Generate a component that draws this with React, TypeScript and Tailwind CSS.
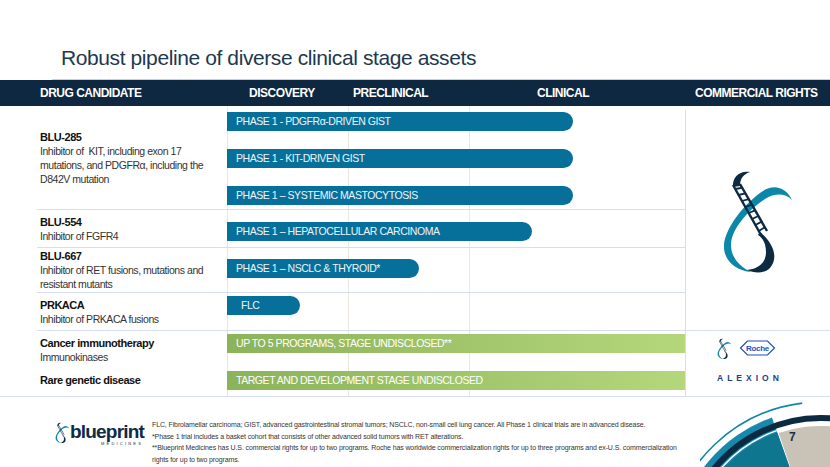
import React from "react";

const narrow = "font-['Liberation_Sans',Arial,sans-serif] tracking-[-0.45px]";

// point on a circle, angle in degrees (counter-clockwise, y down screen)
const pt = (cx: number, cy: number, r: number, a: number) => {
  const t = (a * Math.PI) / 180;
  return [cx + r * Math.cos(t), cy - r * Math.sin(t)];
};

const arc = (cx: number, cy: number, r: number, a0: number, a1: number) => {
  const [x0, y0] = pt(cx, cy, r, a0);
  const [x1, y1] = pt(cx, cy, r, a1);
  return `M${x0} ${y0} A${r} ${r} 0 0 0 ${x1} ${y1}`;
};

const sector = (cx: number, cy: number, r: number, a0: number, a1: number) => {
  const [x0, y0] = pt(cx, cy, r, a0);
  const [x1, y1] = pt(cx, cy, r, a1);
  return `M${cx} ${cy} L${x0} ${y0} A${r} ${r} 0 0 0 ${x1} ${y1} Z`;
};

const Helix: React.FC<{ className?: string }> = ({ className }) => {
  const rungs = [0.08, 0.2, 0.32, 0.44, 0.56, 0.68, 0.8, 0.92];
  return (
    <svg viewBox="0 0 75 110" className={className}>
      <path
        d="M71 35 C66 24 54 18 42 26 C26 36 4 62 3 80 C2 96 16 106 30 107 C18 101 10 92 10 80 C10 64 28 44 44 34 C54 28 64 28 71 35 Z"
        fill="#0b87a9"
      />
      <path d="M12 22 C11 12 19 5 29 7 C23 9 19 13 19 21 Z" fill="#0c2a42" />
      <line x1="12" y1="20" x2="40" y2="70" stroke="#0c2a42" strokeWidth="2.4" />
      <line x1="19" y1="19" x2="46" y2="66" stroke="#0c2a42" strokeWidth="2.4" />
      {rungs.map((t) => (
        <line
          key={t}
          x1={12 + 28 * t}
          y1={20 + 50 * t}
          x2={19 + 27 * t}
          y2={19 + 47 * t}
          stroke="#0c2a42"
          strokeWidth="1.8"
        />
      ))}
      <path
        d="M39 67 C52 78 58 92 49 103 C43 109 33 108 26 105 C37 104 45 98 45 87 C45 79 42 73 37 70 Z"
        fill="#0c2a42"
      />
    </svg>
  );
};

const Corner: React.FC = () => {
  const cx = 121;
  const cy = 161;
  return (
    <svg viewBox="0 0 130 72" className="w-[130px] h-[72px] block">
      <path d={sector(cx, cy, 130, 10, 109)} fill="#c9c2b6" />
      <path d={sector(cx, cy, 147, 109.5, 170)} fill="#1689ad" />
      <path d={sector(cx, cy, 131, 109.5, 170)} fill="#0f7690" />
      <path d={arc(cx, cy, 133, 109.5, 170)} stroke="#ffffff" strokeWidth="1.5" fill="none" />
      <path d={arc(cx, cy, 138, 60, 170)} stroke="#0c2a42" strokeWidth="6" fill="none" />
      <path d={arc(cx, cy, 154, 97, 170)} stroke="#0e86a8" strokeWidth="1.6" fill="none" />
      <text x="89" y="46" fontSize="12" fontWeight="700" fill="#1b2f44" fontFamily="Liberation Sans, Arial, sans-serif">
        7
      </text>
    </svg>
  );
};

const Bar: React.FC<{ label: string; w: string; pad?: string }> = ({ label, w, pad = "pl-[9px]" }) => (
  <div
    className={`h-[19px] ${w} ${pad} bg-[#06709a] rounded-r-full flex items-center text-[10.5px] text-[#eef4f8] whitespace-nowrap ${narrow}`}
  >
    {label}
  </div>
);

const GreenBar: React.FC<{ label: string }> = ({ label }) => (
  <div
    className={`h-[19px] w-full pl-[9px] bg-linear-to-r from-[#8bb35a] to-[#b5d77c] flex items-center text-[10.5px] text-white whitespace-nowrap ${narrow}`}
  >
    {label}
  </div>
);

const grid =
  "bg-[linear-gradient(to_right,#ece8e0_0px,#ece8e0_1px,transparent_1px,transparent_121px,#ece8e0_121px,#ece8e0_122px,transparent_122px,transparent_242px,#ece8e0_242px,#ece8e0_243px,transparent_243px)]";

const Name: React.FC<{ title: string; children?: React.ReactNode }> = ({ title, children }) => (
  <div className={`text-[10.5px] leading-[14px] text-[#333] whitespace-nowrap ${narrow}`}>
    <div className="font-bold text-[11px] text-[#111]">{title}</div>
    {children}
  </div>
);

export default function App() {
  return (
    <div className="w-[830px] h-[467px] bg-white relative overflow-hidden flex flex-col font-['Liberation_Sans',Arial,sans-serif]">
      {/* title */}
      <div className="h-[79px] pl-[61px] pt-[45px]">
        <h1 className="text-[21px] leading-[26px] tracking-[-0.4px] text-[#1d3850]">
          Robust pipeline of diverse clinical stage assets
        </h1>
      </div>
      <div className="ml-[52px] h-px bg-[#c4dca0]" />

      {/* header bar */}
      <div className="h-[26px] bg-[#0d2840] flex items-center text-white font-bold text-[12px] tracking-[-0.5px] whitespace-nowrap">
        <div className="w-[249px] pl-[40px]">DRUG CANDIDATE</div>
        <div className="w-[104px]">DISCOVERY</div>
        <div className="w-[184px]">PRECLINICAL</div>
        <div className="w-[158px]">CLINICAL</div>
        <div>COMMERCIAL RIGHTS</div>
      </div>

      {/* table */}
      <div className="flex">
        <div className="w-[685px] flex flex-col">
          {/* BLU-285 */}
          <div className="h-[104px] flex ml-[37px] border-b border-[#d5def5]">
            <div className="w-[190px] pl-[3px] flex items-center">
              <Name title="BLU-285">
                <div>Inhibitor of&nbsp; KIT, including exon 17</div>
                <div>mutations, and PDGFRα, including the</div>
                <div>D842V mutation</div>
              </Name>
            </div>
            <div className={`flex-1 pt-[6px] flex flex-col gap-[18px] ${grid}`}>
              <Bar label="PHASE 1 - PDGFRα-DRIVEN GIST" w="w-[346px]" />
              <Bar label="PHASE 1 - KIT-DRIVEN GIST" w="w-[346px]" />
              <Bar label="PHASE 1 – SYSTEMIC MASTOCYTOSIS" w="w-[346px]" />
            </div>
          </div>

          {/* BLU-554 */}
          <div className="h-[38px] flex ml-[37px] border-b border-[#d5def5]">
            <div className="w-[190px] pl-[3px] flex items-center">
              <Name title="BLU-554">
                <div>Inhibitor of FGFR4</div>
              </Name>
            </div>
            <div className={`flex-1 pt-[12px] ${grid}`}>
              <Bar label="PHASE 1 – HEPATOCELLULAR CARCINOMA" w="w-[305px]" />
            </div>
          </div>

          {/* BLU-667 */}
          <div className="h-[45px] flex ml-[37px] border-b border-[#d5def5]">
            <div className="w-[190px] pl-[3px] flex items-center">
              <Name title="BLU-667">
                <div>Inhibitor of RET fusions, mutations and</div>
                <div>resistant mutants</div>
              </Name>
            </div>
            <div className={`flex-1 pt-[11px] ${grid}`}>
              <Bar label="PHASE 1 – NSCLC & THYROID*" w="w-[192px]" />
            </div>
          </div>

          {/* PRKACA */}
          <div className="h-[38px] flex ml-[37px] border-b border-[#d5def5]">
            <div className="w-[190px] pl-[3px] flex items-center">
              <Name title="PRKACA">
                <div>Inhibitor of PRKACA fusions</div>
              </Name>
            </div>
            <div className={`flex-1 pt-[3px] ${grid}`}>
              <Bar label="FLC" w="w-[73px]" pad="pl-[14px]" />
            </div>
          </div>

          {/* immunotherapy + rare disease */}
          <div className="h-[65px] flex ml-[37px]">
            <div className="w-[190px] pl-[3px] pt-[5px]">
              <Name title="Cancer immunotherapy">
                <div>Immunokinases</div>
              </Name>
              <div className={`mt-[9px] text-[11px] leading-[14px] font-bold text-[#111] ${narrow}`}>
                Rare genetic disease
              </div>
            </div>
            <div className={`flex-1 pt-[3px] flex flex-col gap-[18px] ${grid}`}>
              <GreenBar label="UP TO 5 PROGRAMS, STAGE UNDISCLOSED**" />
              <GreenBar label="TARGET AND DEVELOPMENT STAGE UNDISCLOSED" />
            </div>
          </div>
        </div>

        {/* commercial rights column */}
        <div className="flex-1 flex flex-col pt-[4px]">
          <div className="h-[221px] border-l border-[#d5def5] border-b flex items-center justify-center">
            <Helix className="w-[75px] h-[110px]" />
          </div>
          <div className="h-[65px] border-l border-[#d5def5] flex flex-col pl-[31px] pt-[6px]">
            <div className="flex items-center gap-[7px] h-[22px]">
              <Helix className="w-[15px] h-[23px]" />
              <svg viewBox="0 0 36 16" className="w-[37px] h-[16px]">
                <path d="M1 8 L8 1 H28 L35 8 L28 15 H8 Z" fill="none" stroke="#1d4fbf" strokeWidth="1.2" />
                <text x="18" y="11" textAnchor="middle" fontSize="8" fontWeight="700" fill="#1d4fbf" fontFamily="Liberation Sans, sans-serif" letterSpacing="-0.3">
                  Roche
                </text>
              </svg>
            </div>
            <div className="mt-[15px] text-[8.5px] leading-[8px] font-bold tracking-[4px] text-[#1f3d8a] font-['Liberation_Sans',Arial,sans-serif]">
              ALEXION
            </div>
          </div>
        </div>
      </div>

      {/* footer */}
      <div className="flex-1 border-t border-[#d5def5] flex">
        <div className="w-[152px] pl-[55px] pt-[19px] flex">
          <Helix className="w-[15px] h-[33px]" />
          <div className="flex flex-col pt-[7px]">
            <div className="text-[19px] leading-[18px] font-bold tracking-[-0.8px] text-[#0f2b48]">blueprint</div>
            <div className="text-[4px] leading-[5px] tracking-[2.2px] text-[#0f2b48] text-right pr-[1px]">MEDICINES</div>
          </div>
        </div>
        <div className="pt-[22px] text-[7px] leading-[11.5px] tracking-[-0.12px] text-[#333] font-['Liberation_Sans',Arial,sans-serif]">
          <div>FLC, Fibrolamellar carcinoma; GIST, advanced gastrointestinal stromal tumors; NSCLC, non-small cell lung cancer. All Phase 1 clinical trials are in advanced disease.</div>
          <div>*Phase 1 trial includes a basket cohort that consists of other advanced solid tumors with RET alterations.</div>
          <div>**Blueprint Medicines has U.S. commercial rights for up to two programs. Roche has worldwide commercialization rights for up to three programs and ex-U.S. commercialization</div>
          <div>rights for up to two programs.</div>
        </div>
      </div>

      {/* corner decoration */}
      <div className="absolute right-0 bottom-0">
        <Corner />
      </div>
    </div>
  );
}
